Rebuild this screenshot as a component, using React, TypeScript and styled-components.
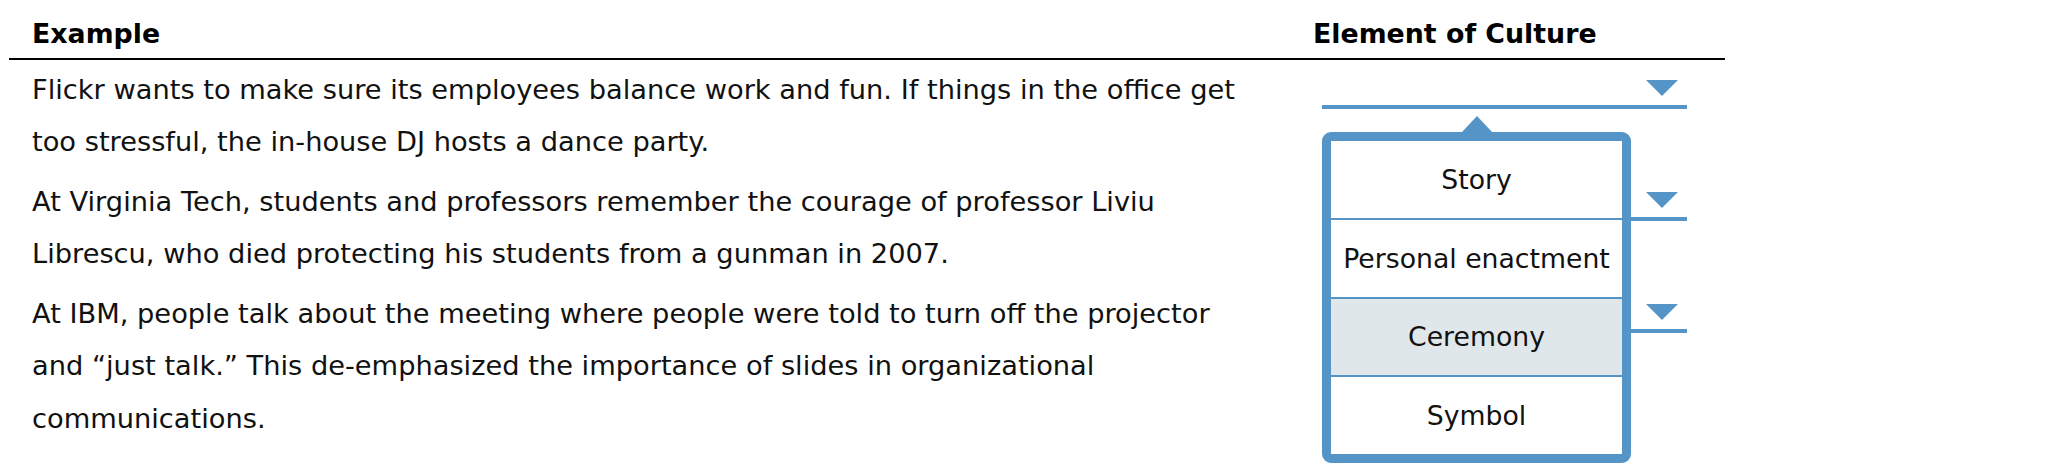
import styled, { createGlobalStyle } from 'styled-components';

const blue = '#5494c6';

const GlobalStyle = createGlobalStyle`
  html, body {
    margin: 0;
    padding: 0;
    background: #fff;
  }
  body {
    min-height: 471px;
    font-family: 'DejaVu Sans', Verdana, sans-serif;
    color: #111;
  }
`;

const Table = styled.div`
  width: 1716px;
  margin-left: 9px;
  padding-bottom: 24px;
  display: flex;
  flex-direction: column;
`;

const Row = styled.div`
  display: grid;
  grid-template-columns: 1281px 435px;
`;

const HeaderRow = styled(Row)`
  border-bottom: 2px solid #000;
`;

const HeaderCell = styled.div`
  padding: 18px 0 8px 23px;
  font-size: 26.8px;
  font-weight: 700;
  line-height: 32px;
  color: #000;
`;

const ExampleCell = styled.div`
  padding: 3.5px 35px 3.5px 23px;
  font-size: 27.25px;
  line-height: 52.5px;
`;

const CultureCell = styled.div`
  padding: 3.5px 0 0 32px;
`;

const Select = styled.div`
  position: relative;
  width: 365px;
  height: 45.5px;
  box-sizing: border-box;
  padding-top: 8px;
  border-bottom: 4px solid ${blue};
  display: flex;
  justify-content: flex-end;
  align-items: center;
`;

const Caret = styled.span`
  width: 0;
  height: 0;
  margin-right: 9px;
  border-left: 16px solid transparent;
  border-right: 16px solid transparent;
  border-top: 16px solid ${blue};
`;

const Popup = styled.ul`
  position: absolute;
  top: 68.5px;
  left: 0;
  z-index: 2;
  width: 309px;
  box-sizing: border-box;
  margin: 0;
  padding: 0;
  list-style: none;
  background: #fff;
  border: 9px solid ${blue};
  border-radius: 9px;

  &::before {
    content: '';
    position: absolute;
    top: -25px;
    left: 50%;
    transform: translateX(-50%);
    border-left: 15.5px solid transparent;
    border-right: 15.5px solid transparent;
    border-bottom: 16px solid ${blue};
  }
`;

const Option = styled.li<{ $active?: boolean }>`
  height: 76.75px;
  display: flex;
  align-items: center;
  justify-content: center;
  font-size: 26.7px;
  color: #111;
  background: ${(p) => (p.$active ? '#dfe7ea' : '#fff')};

  & + & {
    border-top: 2px solid ${blue};
  }
`;

const examples = [
  'Flickr wants to make sure its employees balance work and fun. If things in the office get too stressful, the in-house DJ hosts a dance party.',
  'At Virginia Tech, students and professors remember the courage of professor Liviu Librescu, who died protecting his students from a gunman in 2007.',
  'At IBM, people talk about the meeting where people were told to turn off the projector and \u201cjust talk.\u201d This de-emphasized the importance of slides in organizational communications.',
];

const options = ['Story', 'Personal enactment', 'Ceremony', 'Symbol'];

export default function App() {
  return (
    <>
      <GlobalStyle />
      <Table>
        <HeaderRow>
          <HeaderCell>Example</HeaderCell>
          <HeaderCell>Element of Culture</HeaderCell>
        </HeaderRow>
        {examples.map((text, i) => (
          <Row key={i}>
            <ExampleCell>{text}</ExampleCell>
            <CultureCell>
              <Select>
                <Caret />
                {i === 0 && (
                  <Popup>
                    {options.map((o) => (
                      <Option key={o} $active={o === 'Ceremony'}>
                        {o}
                      </Option>
                    ))}
                  </Popup>
                )}
              </Select>
            </CultureCell>
          </Row>
        ))}
      </Table>
    </>
  );
}
